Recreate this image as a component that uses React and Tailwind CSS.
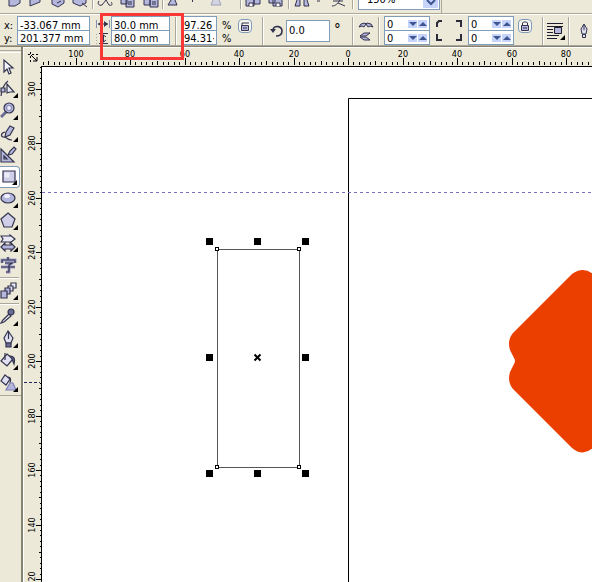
import { useEffect, useId, useState } from 'react'

const MM = 2.725 // pixels per millimetre at the current zoom

const INK = '#33334f'
const FILL = '#b4b6dc'

function Icon({ size = 18, children }) {
  return (
    <svg width={size} height={size} viewBox="0 0 18 18" fill={FILL} stroke={INK} strokeWidth="1.2" className="shrink-0">
      {children}
    </svg>
  )
}

const tools = [
  {
    name: 'Pick',
    icon: <path d="M4 2v12l3-3 2 5 2-1-2-5h4z" fill="#f4f4fc" />,
  },
  {
    name: 'Shape',
    flyout: true,
    icon: <><path d="M1 16C2 8 4 4 8 1" fill="none" /><path d="M1 8h4v4H1z" /><path d="M7 4v9l3-1h4z" fill="#e8e8f6" /></>,
  },
  {
    name: 'Zoom',
    flyout: true,
    icon: <><path d="M6 10l-5 5" strokeWidth="3" stroke="#6a6c94" /><circle cx="9" cy="6" r="5" /><circle cx="9" cy="6" r="2.5" fill="#eef" stroke="#8a8cb4" /></>,
  },
  {
    name: 'Freehand',
    flyout: true,
    icon: <><path d="M6 8l4-6 4 2-4 7-5 2z" /><path d="M5 8c-5 1-4 5-1 5s3 3 8 3" fill="none" /></>,
  },
  {
    name: 'Smart Drawing',
    icon: <><path d="M1 3v13h13z" /><path d="M4 10v3h3z" fill="#ece9d8" /><path d="M8 9l2-4 4-4 2 2-4 5z" /></>,
  },
  {
    name: 'Rectangle',
    flyout: true,
    icon: <><path d="M3 3h12v11H3z" fill="#cfd0e8" /><path d="M4.500 4.500h5v5h-5z" fill="#ececf8" stroke="none" /></>,
  },
  {
    name: 'Ellipse',
    flyout: true,
    icon: <><ellipse cx="8" cy="8" rx="7" ry="5" /><ellipse cx="7" cy="6" rx="3" ry="2" fill="#eef" stroke="none" /></>,
  },
  {
    name: 'Polygon',
    flyout: true,
    icon: <path d="M8 1l7 6-3 8H4L1 7z" fill="#cfd0e8" />,
  },
  {
    name: 'Basic Shapes',
    flyout: true,
    icon: <><path d="M1 2l2 3-2 3h9v1l5-4-5-4v1z" fill="#e8e8f6" /><path d="M1 13l4-4v2h6V9l4 4-4 4v-2H5v2z" /></>,
  },
  {
    name: 'Text',
    icon: (
      <g fill="none">
        <path d="M8 1v3M2 7V4h13v3M5 7h7L9 9v7H6M1 11h14" stroke="#9a9cc4" strokeWidth="3" />
        <path d="M8 1v3M2 7V4h13v3M5 7h7L9 9v7H6M1 11h14" />
      </g>
    ),
  },
  {
    name: 'Interactive Blend',
    flyout: true,
    divider: true,
    icon: <><path d="M11 1h5v5h-5z" fill="#f4f4fc" /><path d="M8 4h5v5H8z" fill="#e0e0f2" /><path d="M5 6h5v6H5z" /><path d="M1 9h6v7H1z" /></>,
  },
  {
    name: 'Eyedropper',
    flyout: true,
    divider: true,
    icon: <><path d="M9 6l-6 6-2 3 3-1 7-6z" fill="#e8e8f6" /><circle cx="11" cy="4" r="3" fill="#6a6c94" /></>,
  },
  {
    name: 'Outline',
    flyout: true,
    icon: <><path d="M8 1L4 8l2 5h5l2-5z" fill="#e0e0f2" /><path d="M8.500 1v8M6 13h5v4H6z" fill="#6a6c94" /></>,
  },
  {
    name: 'Fill',
    flyout: true,
    icon: <><path d="M7 2l6 5-6 7-6-5z" fill="#e0e0f2" /><path d="M5 8V1" fill="none" /><path d="M10 4c5 0 5 4 4 8l-2-5z" fill="#6a6c94" /></>,
  },
  {
    name: 'Interactive Fill',
    flyout: true,
    icon: <><path d="M5 1l5 4-4 6-5-4z" fill="#e0e0f2" /><path d="M8 3c3 0 3 3 2 6" fill="none" /><path d="M10 9l-4 7h10l-3-7z" stroke="#7c7fb8" /></>,
  },
]

function ToolBox() {
  const [active, setActive] = useState('Rectangle')

  return (
    <nav aria-label="Toolbox" className="w-[21px] shrink-0 pt-[3px]">
      <div className="border-y border-t-[#aca899] border-b-white h-[3px]" />
      <div className="flex flex-col pt-[3px] pb-px border-b border-[#aca899]">
        {tools.map((tool) => (
          <div key={tool.name}>
            {tool.divider && <div className="w-[19px] h-0.5 border-t border-[#aca899] bg-white my-px" />}
            <button
              type="button"
              title={tool.name}
              onClick={() => setActive(tool.name)}
              className={`relative flex items-center w-5 h-[22px] ${
                active === tool.name ? 'bg-white border border-l-0 border-[#7f9db9] rounded-r-sm' : ''
              }`}
            >
              <Icon>{tool.icon}</Icon>
              {tool.flyout && (
                <svg width="5" height="5" className="absolute right-0.5 bottom-0.5">
                  <path d="M5 0v5H0z" />
                </svg>
              )}
            </button>
          </div>
        ))}
      </div>
    </nav>
  )
}

function Divider() {
  return <div className="w-0.5 h-7 border-l border-[#aca899] bg-white shrink-0" />
}

function Field({ label, value, className }) {
  return (
    <input
      aria-label={label}
      defaultValue={value}
      className={`block border border-[#7f9db9] bg-white px-0.5 outline-none ${className}`}
    />
  )
}

function Pair({ labels, values, className }) {
  return (
    <div className={`flex flex-col shrink-0 ${className}`}>
      <Field label={labels[0]} value={values[0]} className="w-full h-[15px] pt-[3px] leading-[11px]" />
      <Field label={labels[1]} value={values[1]} className="w-full h-[15px] pt-0.5 leading-[11px] -mt-px" />
    </div>
  )
}

function SpinButton({ label, up }) {
  return (
    <button type="button" aria-label={label} className="w-[9px] h-2 bg-[#c6d4fb] flex items-center justify-center">
      <svg width="8" height="6">
        <path d={up ? 'M0 5l4-4 4 4z' : 'M0 1l4 4 4-4z'} fill="#3f5590" />
      </svg>
    </button>
  )
}

function CornerSpin({ label }) {
  return (
    <div className="flex items-center w-[46px] h-[15px] border border-[#7f9db9] bg-white pr-0.5 gap-px">
      <input aria-label={label} defaultValue="0" className="min-w-0 flex-1 h-[13px] pt-0.5 leading-[11px] px-0.5 outline-none" />
      <SpinButton label={`${label} down`} />
      <SpinButton label={`${label} up`} up />
    </div>
  )
}

function CornerSpins({ side }) {
  return (
    <div className="flex flex-col shrink-0">
      <CornerSpin label={`${side} top corner`} />
      <div className="-mt-px"><CornerSpin label={`${side} bottom corner`} /></div>
    </div>
  )
}

function LockButton({ label, open }) {
  return (
    <button type="button" aria-label={label} className="mb-2.5 size-[14px] shrink-0 rounded-sm border border-[#7f9db9] bg-[#f6f5ee] flex items-center justify-center">
      <svg width="10" height="10" fill="none" stroke={INK}>
        <path d={open ? 'M2 5V2h5M8 1v2' : 'M2.500 5V2l1-1h3l1 1v3'} />
        <path d="M1.500 4.500h7v5h-7zM3 7h4" fill={FILL} />
      </svg>
    </button>
  )
}

function PropertyBar() {
  const id = useId()

  return (
    <section aria-label="Property bar" className="flex items-center h-8 pl-1 pt-px overflow-hidden border-t border-white border-b border-b-[#aca899]">
      <div className="flex flex-col w-[13px] pt-0.5 shrink-0 leading-[13px]">
        <label htmlFor={`${id}x`}>x:</label>
        <label htmlFor={`${id}y`}>y:</label>
      </div>
      <div className="flex flex-col w-[73px] shrink-0">
        <input id={`${id}x`} defaultValue="-33.067 mm" className="h-[15px] pt-[3px] leading-[11px] border border-[#7f9db9] bg-white px-0.5 outline-none" />
        <input id={`${id}y`} defaultValue="201.377 mm" className="h-[15px] pt-0.5 leading-[11px] -mt-px border border-[#7f9db9] bg-white px-0.5 outline-none" />
      </div>
      <svg width="14" height="26" className="ml-1.5 mr-px shrink-0" fill="none" stroke={INK}>
        <path d="M.5 2v8M13.500 2v8" stroke="#8a8cb4" />
        <path d="M2 6h10" />
        <path d="M2 6l4-3v6zM12 6L8 3v6z" fill={INK} stroke="none" />
        <path d="M3 15.500h9M3 25.500h9M7.500 17v7M5 19l2.500-2L10 19M5 22l2.500 2L10 22" />
        <path d="M.5 16v10" strokeDasharray="1 2" stroke="#aca899" />
      </svg>
      <Pair labels={['Width', 'Height']} values={['30.0 mm', '80.0 mm']} className="w-[59px] mr-[5px]" />
      <Divider />
      <Pair labels={['Horizontal scale', 'Vertical scale']} values={['97.26', '94.31·']} className="w-[36px] ml-1" />
      <div className="flex flex-col ml-[5px] w-4 pt-0.5 leading-[13px] shrink-0">
        <span>%</span>
        <span>%</span>
      </div>
      <LockButton label="Nonproportional scaling" open />
      <div className="w-2.5 shrink-0" />
      <Divider />
      <svg width="14" height="14" className="ml-1.5 mr-0.5 shrink-0" fill="none" stroke={INK} strokeWidth="1.600">
        <path d="M3 5c2-4 9-3 9 2 0 3-2 5-6 5" />
        <path d="M0 5h6L3 9z" fill={INK} stroke="none" />
      </svg>
      <Field label="Angle of rotation" value="0.0" className="w-[44px] h-[22px] shrink-0" />
      <span className="w-[22px] pl-1 shrink-0 text-[15px]">°</span>
      <Divider />
      <div className="flex flex-col gap-[3px] mx-1 shrink-0">
        <button type="button" aria-label="Mirror horizontally">
          <svg width="16" height="8" fill={FILL} stroke={INK} className="block">
            <path d="M1 6l2-3 4-1 1 1-2 3-2-1zM15 6l-2-3-4-1-1 1 2 3 2-1z" />
          </svg>
        </button>
        <button type="button" aria-label="Mirror vertically">
          <svg width="16" height="9" fill={FILL} stroke={INK} className="block">
            <path d="M2 4l4-3h6L8 4zM2 5l4 3h6L8 5z" />
          </svg>
        </button>
      </div>
      <Divider />
      <div className="w-1 shrink-0" />
      <CornerSpins side="Left" />
      <svg width="26" height="22" className="mx-1.5 shrink-0" fill="none" stroke="#2b2b3c" strokeWidth="2">
        <path d="M1 7V3l2-2h3M20 1h5v6M1 14v6h5M20 20h5v-6" />
      </svg>
      <CornerSpins side="Right" />
      <div className="w-1 shrink-0" />
      <LockButton label="Round corners together" />
      <div className="w-2.5 shrink-0" />
      <Divider />
      <button type="button" aria-label="Wrap paragraph text" className="mx-[3px] shrink-0">
        <svg width="18" height="18" stroke="#1c1c2c" fill="none">
          <path d="M0 1.500h16M0 4.500h16M0 7.500h6M0 10.500h6M0 13.500h12M0 16.500h10" />
          <path d="M7.500 5.500h7v6h-7z" fill={FILL} />
          <path d="M18 13v5h-5z" fill="#000" stroke="none" />
        </svg>
      </button>
      <Divider />
      <svg width="10" height="16" className="ml-[9px] mr-[3px] shrink-0" fill="#dcdcf0" stroke={INK}>
        <path d="M5 1L2 6l1 5h4l1-5zM5 1v6M3.500 11.500h3v3h-3z" />
      </svg>
      <Field label="Outline width" value="" className="min-w-0 flex-1 h-[22px]" />
    </section>
  )
}

function StandardBar() {
  return (
    <section aria-label="Standard toolbar" className="h-[14px] overflow-hidden border-b border-[#aca899]">
      <div className="flex items-start w-[442px] h-full border-r border-[#aca899]">
        <svg width="358" height="13" fill={FILL} stroke={INK} className="shrink-0">
          <path d="M9 0v6h6l5-3V0M30 0v6l10-4V0M52 0v4l6 3 6-4V0M73 0v3l7 3 6-3V0" />
          <path d="M82 3l5 4M57 3l4-2" fill="none" />
          <path d="M99 1c-2 3 0 5 3 4l4-5 3 5c3 1 4-1 2-3" fill="none" />
          <path d="M121 0v4h6V0M126 0v7h8V0M144 0v5h6V0M150 0v7h8V0" />
          <path d="M128 2h4M128 4h4M152 2h4M152 4h4" />
          <path d="M171 0l-3 5h9l-2-5" />
          <path d="M213 0l-2 5h10l-2-5" stroke="#a0a0b8" fill="#d4d4e4" />
          <path d="M246 0v6h8V0M254 0v4h6V0M269 0v3h6V0M273 0v6h9V0" />
          <path d="M249 6V3h4v3M276 6V3h4v3" fill="#fff" />
          <path d="M297 0l-2 6h5V0M304 0v6h5l-2-6" />
          <path d="M332 6c4 0 6-3 8-6M333 1h10M338 3l7 3" fill="none" />
          <path d="M192.500 0v2M317 1h3" />
          <path d="M92.500 0v9M162.500 0v9M240.500 0v9M288.500 0v9M352.500 0v9" stroke="#aca899" />
          <path d="M93.500 0v9M163.500 0v9M241.500 0v9M289.500 0v9M353.500 0v9" stroke="#fff" />
        </svg>
        <div className="relative w-[82px] -mt-2.5">
          <select aria-label="Zoom level" className="block appearance-none w-full h-5 pl-2 border border-[#7f9db9] bg-white outline-none">
            <option>150%</option>
          </select>
          <svg width="15" height="16" className="absolute right-0.5 top-0.5 pointer-events-none">
            <rect width="15" height="16" rx="1" fill="#c6d4fb" />
            <path d="M4 8l4 4 4-4" fill="none" stroke="#3f5590" strokeWidth="2" />
          </svg>
        </div>
      </div>
    </section>
  )
}

const range = (from, to, step) => {
  const list = []
  for (let n = from; n <= to; n += step) list.push(n)
  return list
}

function useWindowSize() {
  const [size, setSize] = useState([window.innerWidth, window.innerHeight])

  useEffect(() => {
    const onResize = () => setSize([window.innerWidth, window.innerHeight])
    window.addEventListener('resize', onResize)
    return () => window.removeEventListener('resize', onResize)
  }, [])

  return size
}

function tickLength(mm) {
  if (mm % 20 === 0) return 7
  return mm % 10 === 0 ? 4 : 3
}

function HorizontalRuler() {
  const [width] = useWindowSize()
  const origin = 306
  const last = Math.floor((width - 42 - origin) / MM)

  return (
    <svg className="block w-full h-[18px]" shapeRendering="crispEdges">
      {range(-112, last, 2).map((mm) => {
        const x = Math.round(origin + mm * MM)
        return (
          <g key={mm}>
            <path d={`M${x + 0.5} 17v-${tickLength(mm)}`} stroke="#000" />
            {mm % 20 === 0 && <text x={x} y="9" textAnchor="middle">{Math.abs(mm)}</text>}
          </g>
        )
      })}
    </svg>
  )
}

function VerticalRuler() {
  const [, height] = useWindowSize()
  const zero = 840
  const first = Math.ceil((zero - height + 66) / MM / 2) * 2

  return (
    <svg className="block w-[17px] h-full" shapeRendering="crispEdges">
      {range(first, 308, 2).map((mm) => {
        const y = Math.round(zero - mm * MM)
        return (
          <g key={mm}>
            <path d={`M17 ${y + 0.5}h-${tickLength(mm) - 2}`} stroke="#000" />
            {mm % 20 === 0 && (
              <text transform={`translate(11 ${y}) rotate(-90)`} textAnchor="middle">{mm}</text>
            )}
          </g>
        )
      })}
      <path d="M0 316.500h16" stroke="#26265c" strokeDasharray="3 2" />
    </svg>
  )
}

const handles = [
  [164, 171], [212, 171], [260, 171],
  [164, 287], [260, 287],
  [164, 403], [212, 403], [260, 403],
]

const nodes = [[175, 182], [257, 182], [175, 400], [257, 400]]

function Drawing() {
  return (
    <svg className="block w-full h-full bg-white" aria-label="Drawing page">
      <path d="M306.500 2000V31.500H2000" fill="none" stroke="#000" />
      <path
        d="M600 256L551 207Q541 199 530 207L471 266Q465 273 468 283L472 291Q474 294 472 297L468 305Q465 315 471 322L530 381Q541 390 551 381L600 332Z"
        fill="#eb3f00"
      />
      <path d="M0 125.500H2000" stroke="#7a70c0" strokeDasharray="3 3" />
      <rect x="175.500" y="182.500" width="82" height="218" fill="none" stroke="#555" />
      {nodes.map(([x, y]) => (
        <rect key={`${x}-${y}`} x={x - 1.5} y={y - 1.5} width="3" height="3" fill="#fff" stroke="#000" />
      ))}
      {handles.map(([x, y]) => (
        <rect key={`${x}-${y}`} x={x} y={y} width="7" height="7" />
      ))}
      <path d="M212.500 287.500l6 6M218.500 287.500l-6 6" stroke="#000" strokeWidth="2" />
    </svg>
  )
}

function Workspace() {
  return (
    <main className="flex-1 min-w-0 flex flex-col border-l-2 border-[#85836f] text-[9px]">
      <div className="flex border-t border-l border-white">
        <svg width="18" height="18" className="shrink-0" stroke="#000" fill="none">
          <path d="M4 6.500h10M6.500 4v11" strokeDasharray="2 2" />
          <path d="M7 7l6 6M13 9v4H9" />
        </svg>
        <div className="flex-1 min-w-0">
          <HorizontalRuler />
        </div>
      </div>
      <div className="flex flex-1 min-h-0">
        <div className="w-[18px] border-l border-white shrink-0">
          <VerticalRuler />
        </div>
        <div className="flex-1 min-w-0 border-l border-t border-black">
          <Drawing />
        </div>
      </div>
    </main>
  )
}

export default function App() {
  return (
    <div className="relative h-screen flex flex-col overflow-hidden bg-[#ece9d8] text-black text-[11px] font-['DejaVu_Sans_Condensed','DejaVu_Sans',sans-serif]">
      <StandardBar />
      <PropertyBar />
      <div className="flex flex-1 min-h-0 border-t border-[#85836f]">
        <ToolBox />
        <Workspace />
      </div>
      <div className="absolute left-[100px] top-[13px] w-[84px] h-[47px] border-3 border-[#fa3737] pointer-events-none" />
    </div>
  )
}
